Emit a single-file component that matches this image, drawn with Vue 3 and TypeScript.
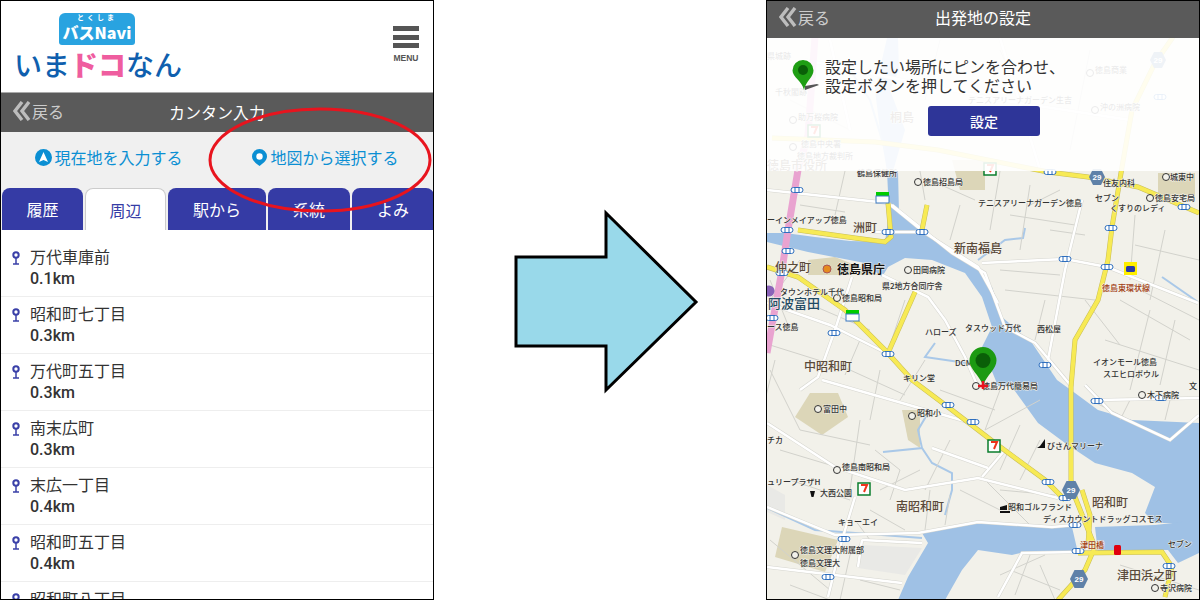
<script setup lang="ts">
interface Stop { name: string; dist: string }
interface Label { x: number; y: number; t: string; k?: string }

const tabs = ['履歴', '周辺', '駅から', '系統', 'よみ']
const stops: Stop[] = [
  { name: '万代車庫前', dist: '0.1km' },
  { name: '昭和町七丁目', dist: '0.3km' },
  { name: '万代町五丁目', dist: '0.3km' },
  { name: '南末広町', dist: '0.3km' },
  { name: '末広一丁目', dist: '0.4km' },
  { name: '昭和町五丁目', dist: '0.4km' },
  { name: '昭和町八丁目', dist: '0.4km' },
]

// everything on the map is in page coordinates (viewBox follows the page)
const water = [
  '767,233 785,233 815,237 850,241 885,242 889,213 887,171 898,171 899,213 925,233 952,253 978,270 992,287 1002,317 1032,343 1057,380 1075,393 1098,410 1132,420 1199,423 1199,523 1155,523 1145,513 1155,487 1132,473 1095,463 1065,443 1038,423 1012,387 998,386 982,347 992,327 982,297 965,273 932,260 905,258 888,267 882,277 865,263 808,252 767,242',
  '922,533 975,522 1072,527 1078,553 1025,552 1012,555 978,550 962,570 945,600 898,600 908,577 928,543',
  '1095,527 1155,525 1199,520 1199,553 1178,563 1168,550 1118,550 1098,553',
  '887,38 898,38 899,70 890,90 905,130 893,171 887,171 880,130 875,90',
]
const beige = [
  '810,393 838,393 848,417 822,435 795,417',
  '902,410 920,410 920,448 908,440',
  '782,527 838,540 825,572 775,557',
  '808,260 835,257 880,275 808,275',
  '952,160 985,160 985,190 960,190',
  '1158,173 1195,173 1195,197 1158,197',
]
const grey = ['767,485 785,495 785,520 767,512', '862,545 922,548 905,575 858,568']
const minor = [
  '845,171 835,215', '920,171 925,200', '1000,171 990,230', '1030,185 1020,250', '1050,230 1085,235',
  '1000,270 1060,275', '1005,290 1095,300', '1135,215 1130,280', '1165,230 1150,300', '1120,300 1190,340',
  '1105,340 1199,370', '1150,310 1130,390', '800,300 870,330', '770,345 850,370', '850,370 905,395',
  '880,370 870,420', '925,360 900,400', '940,390 995,410', '1000,390 985,430', '985,430 1040,400',
  '770,370 800,430', '800,430 870,445', '860,420 850,490', '875,450 900,470', '900,470 890,500',
  '780,450 830,465', '790,480 850,500', '870,510 905,530', '930,490 925,530', '950,495 945,525',
  '985,480 1030,525', '1000,490 1055,495', '1020,425 1000,470', '1040,440 1020,480', '770,540 830,590',
  '1010,570 1060,590', '1030,555 1015,595', '1090,400 1150,430', '1130,400 1120,420', '1170,400 1165,420',
  '1120,565 1199,590', '850,555 840,600', '860,580 900,590', '770,280 790,330', '800,260 770,300',
  '940,40 925,100', '1000,50 1030,120', '1090,50 1070,150', '790,100 850,130', '930,110 1020,130',
  '1030,205 1060,190', '1135,245 1199,260', '1140,290 1199,320', '1175,320 1160,385', '1085,300 1120,345',
  '1045,300 1035,340', '1010,215 1075,225', '930,180 975,200', '960,205 950,240', '800,205 845,212',
  '775,360 765,400', '905,300 890,345', '860,340 845,375', '950,440 925,490', '880,490 920,470',
  '1000,575 1045,555', '1040,565 1055,600', '790,585 830,600', '855,520 870,540', '960,490 1000,510',
]
const whites = [
  '767,190 888,203 925,233 978,267 998,303',
  '892,205 952,253 985,273 1005,327 1035,343 1072,387',
  '982,263 1065,259 1107,267 1198,303',
  '1082,200 1065,270 1048,360',
  '852,277 835,330 818,377 800,390',
  '882,275 928,297 945,320 965,357 978,387',
  '822,380 968,422 990,440',
  '767,423 835,467 905,490 978,478 1058,498',
  '767,507 835,535 918,533 978,522 1052,527 1075,525',
  '855,497 842,540 828,597',
  '932,448 988,468',
  '1005,450 982,477',
  '1098,400 1199,398',
  '1085,385 1112,413 1170,440 1199,415',
  '1078,552 1022,553 998,597',
  '767,567 902,583',
  '862,540 858,567',
  '862,540 922,543',
  '870,232 925,232',
  '767,303 830,325 890,355',
  '805,60 1000,100 1130,120',
  '830,40 850,130',
  '1000,38 1040,170',
]
const streams = [
  '978,260 1005,240 1023,238 1025,228',
  '1162,277 1198,302',
  '935,343 925,357 980,365',
  '928,413 918,430 922,448 883,452',
  '922,448 932,463 952,473 952,490 945,515',
  '767,508 815,530 922,538',
  '850,70 870,100 885,150',
]
const yellows = [
  '1173,37 1155,63 1132,110 1122,167 1112,227 1108,260 1098,300 1075,340 1071,387 1071,480 1075,497 1095,547 1085,570 1058,600',
  '767,267 798,277 845,310 885,350 912,380 948,407 995,443 1045,480 1065,500',
  '915,292 888,353',
  '888,203 891,237 885,242 855,238 798,230',
  '927,205 922,230',
  '772,138 875,142 938,150 1048,172 1088,177 1138,187 1199,213',
  '1078,553 1162,552 1172,567 1165,597',
  '1082,490 1090,515 1088,545',
]
const rail = '815,37 808,135 798,170 788,230 782,270 767,353'
const shields = [
  { x: 1097, y: 177, r: 8 },
  { x: 1071, y: 490, r: 9 },
  { x: 1079, y: 579, r: 9 },
  { x: 1158, y: 60, r: 8 },
]
const bridges = [
  [797, 190], [787, 230], [788, 251], [888, 232], [922, 232], [1065, 259], [1107, 267], [1111, 228], [1184, 207],
  [782, 273], [834, 333], [888, 354], [1045, 365], [772, 318], [948, 405], [973, 422], [1097, 401], [1161, 398],
  [1048, 482], [1065, 498], [1075, 525], [1078, 551], [1169, 566], [844, 539], [828, 577], [1050, 172], [1160, 97],
]
const sevens = [[988, 440], [858, 483], [984, 163], [808, 125]]
const marks = [
  [918, 182], [1150, 198], [1166, 177], [837, 298], [908, 270], [976, 386], [1142, 395], [818, 409], [912, 416],
  [837, 470], [795, 555], [1155, 588], [1090, 73], [1095, 110], [793, 147], [793, 120],
]

const labels: Label[] = [
  { x: 857, y: 176, t: '鶴島保健所' }, { x: 923, y: 185, t: '徳島招島局' }, { x: 1170, y: 180, t: '城東中' },
  { x: 1155, y: 201, t: '徳島安宅局' }, { x: 1103, y: 186, t: '住友内科' }, { x: 1095, y: 201, t: 'セブン' },
  { x: 1110, y: 211, t: 'くすりのレディ' }, { x: 978, y: 206, t: 'テニスアリーナガーデン徳島' },
  { x: 767, y: 223, t: 'ーインメイアップ徳島' }, { x: 780, y: 295, t: 'タウンホテル千代' },
  { x: 842, y: 301, t: '徳島昭和局' }, { x: 913, y: 273, t: '田岡病院' }, { x: 882, y: 289, t: '県2地方合同庁舎' },
  { x: 925, y: 335, t: 'ハローズ' }, { x: 965, y: 331, t: 'タスウッド万代' }, { x: 1037, y: 332, t: '西松屋' },
  { x: 767, y: 330, t: 'ース徳島' }, { x: 955, y: 366, t: 'DCM' }, { x: 903, y: 381, t: 'キリン堂' },
  { x: 982, y: 389, t: '徳島万代簡易局' }, { x: 1093, y: 365, t: 'イオンモール徳島' },
  { x: 1103, y: 377, t: 'スエヒロボウル' }, { x: 1189, y: 389, t: '文' },
  { x: 1147, y: 398, t: '木下病院' }, { x: 823, y: 412, t: '富田中' }, { x: 917, y: 416, t: '昭和小' },
  { x: 1047, y: 449, t: 'びさんマリーナ' }, { x: 767, y: 443, t: 'チカ' }, { x: 842, y: 470, t: '徳島南昭和局' },
  { x: 767, y: 485, t: 'ュリープラザH' }, { x: 820, y: 496, t: '大西公園' }, { x: 1008, y: 510, t: '昭和ゴルフランド' },
  { x: 1043, y: 522, t: 'ディスカウントドラッグコスモス' }, { x: 838, y: 525, t: 'キョーエイ' },
  { x: 1168, y: 547, t: 'セブン' }, { x: 800, y: 553, t: '徳島文理大附属部' }, { x: 800, y: 566, t: '徳島文理大' },
  { x: 1160, y: 591, t: '寺沢病院' },
  { x: 1095, y: 73, t: '徳島商業' }, { x: 1100, y: 110, t: '沖の洲病院' }, { x: 968, y: 103, t: 'テニスアリーナガーデン生吉' },
  { x: 798, y: 120, t: '助万桜病院' }, { x: 801, y: 147, t: '徳島中央署' }, { x: 797, y: 159, t: '徳島地方裁判所' },
  { x: 775, y: 95, t: '千秋閣跡' }, { x: 767, y: 59, t: '県城跡' },
  { x: 1102, y: 291, t: '徳島東環状線', k: 'route' }, { x: 1080, y: 548, t: '津田橋', k: 'route' },
  { x: 853, y: 232, t: '洲町', k: 'area' }, { x: 954, y: 253, t: '新南福島', k: 'area' },
  { x: 804, y: 371, t: '中昭和町', k: 'area' }, { x: 775, y: 272, t: '仲之町', k: 'area' },
  { x: 896, y: 511, t: '南昭和町', k: 'area' }, { x: 1092, y: 507, t: '昭和町', k: 'area' },
  { x: 1117, y: 580, t: '津田浜之町', k: 'area' }, { x: 890, y: 122, t: '桐島', k: 'area' },
  { x: 767, y: 170, t: '徳島市役所', k: 'area' },
  { x: 768, y: 308, t: '阿波富田', k: 'station' }, { x: 837, y: 274, t: '徳島県庁', k: 'office' },
]
</script>

<template>
  <div class="page">
    <section class="phone">
      <header class="site-head">
        <div class="logo">
          <div class="bus">
            <span class="bus-small">とくしま</span>
            <span class="bus-name">バスNavi</span>
          </div>
          <div class="logo-text">いま<b>ドコ</b>なん</div>
        </div>
        <div class="menu">
          <i /><i /><i />
          <span>MENU</span>
        </div>
      </header>

      <div class="bar">
        <span class="back">
          <svg width="18" height="20" viewBox="0 0 18 20" fill="none" stroke="#bdbdbd" stroke-width="3.4">
            <path d="M9 1 2 10l7 9M16 1 9 10l7 9" />
          </svg>
          戻る
        </span>
        <span class="bar-title">カンタン入力</span>
      </div>

      <div class="actions">
        <a>
          <svg width="17" height="17" viewBox="0 0 17 17">
            <circle cx="8.5" cy="8.5" r="8.5" fill="#0b8fd3" />
            <path d="M8.5 3 13 13l-4.5-2L4 13z" fill="#fff" />
          </svg>
          現在地を入力する
        </a>
        <a>
          <svg width="17" height="17" viewBox="0 0 17 17">
            <path d="M8.5 0A7.500 7.500 0 0 1 16 7.500C16 12 11 15 8.500 17 6 15 1 12 1 7.500A7.500 7.500 0 0 1 8.500 0z" fill="#0b8fd3" />
            <circle cx="8.5" cy="7.5" r="3.2" fill="#fff" />
          </svg>
          地図から選択する
        </a>
      </div>

      <nav class="tabs">
        <span v-for="(tab, i) in tabs" :key="tab" class="tab" :class="{ active: i === 1 }">{{ tab }}</span>
      </nav>

      <ul class="stops">
        <li v-for="stop in stops" :key="stop.name">
          <svg class="stop-icon" width="8" height="14" viewBox="0 0 8 14" fill="none" stroke="#3a40a8">
            <circle cx="4" cy="4" r="2.7" stroke-width="2" />
            <path d="M4 7v6M1 13h6" stroke-width="1.5" />
          </svg>
          <div>
            <div class="stop-name">{{ stop.name }}</div>
            <div class="stop-dist">{{ stop.dist }}</div>
          </div>
        </li>
      </ul>

      <svg class="ring" width="226" height="108" viewBox="0 0 226 108" fill="none">
        <ellipse cx="113" cy="54" rx="110" ry="51" stroke="#e8141e" stroke-width="3" />
      </svg>
    </section>

    <div class="between">
      <svg width="332" height="600" viewBox="434 0 332 600">
        <path d="M516 257h90v-44l90 89-90 88v-44h-90z" fill="#99d9ea" stroke="#000" stroke-width="3" />
      </svg>
    </div>

    <section class="phone">
      <div class="bar top">
        <span class="back">
          <svg width="18" height="20" viewBox="0 0 18 20" fill="none" stroke="#bdbdbd" stroke-width="3.4">
            <path d="M9 1 2 10l7 9M16 1 9 10l7 9" />
          </svg>
          戻る
        </span>
        <span class="bar-title">出発地の設定</span>
      </div>

      <div class="map">
        <svg class="map-svg" width="432" height="561" viewBox="767 38 432 561">
          <rect x="767" y="38" width="432" height="561" fill="#f2f1ea" />
          <polygon v-for="p in beige" :key="p" :points="p" fill="#dcd6b8" />
          <polygon v-for="p in grey" :key="p" :points="p" fill="#e9e9e6" />
          <polygon v-for="p in water" :key="p" :points="p" fill="#9fc1e5" />
          <polyline v-for="p in streams" :key="p" :points="p" fill="none" stroke="#a9c8e8" stroke-width="2" />
          <polyline v-for="p in minor" :key="p" :points="p" fill="none" stroke="#d2d2cc" stroke-width="1" />
          <polyline v-for="p in whites" :key="p" :points="p" fill="none" stroke="#d6d6d0" stroke-width="3.5" />
          <polyline v-for="p in whites" :key="'w' + p" :points="p" fill="none" stroke="#fff" stroke-width="2.5" />
          <polyline :points="rail" fill="none" stroke="#e9a3d0" stroke-width="7" />
          <polyline v-for="p in yellows" :key="p" :points="p" fill="none" stroke="#c8bd58" stroke-width="5" />
          <polyline v-for="p in yellows" :key="'y' + p" :points="p" fill="none" stroke="#f7ea55" stroke-width="4" />

          <g v-for="b in bridges" :key="b.join()">
            <rect :x="b[0] - 6" :y="b[1] - 2.5" width="12" height="5" rx="2.5" fill="#fff" stroke="#2f6fbe" />
            <path :d="`M${b[0] - 2} ${b[1] - 2}v4M${b[0] + 2} ${b[1] - 2}v4`" stroke="#2f6fbe" />
          </g>
          <g v-for="s in shields" :key="s.x">
            <polygon
              :points="`${s.x - s.r},${s.y} ${s.x - s.r / 2},${s.y - s.r} ${s.x + s.r / 2},${s.y - s.r} ${s.x + s.r},${s.y} ${s.x + s.r / 2},${s.y + s.r} ${s.x - s.r / 2},${s.y + s.r}`"
              fill="#5f81a8"
            />
            <text class="shield" :x="s.x" :y="s.y + 3">29</text>
          </g>
          <g v-for="s in sevens" :key="s.join()">
            <rect :x="s[0]" :y="s[1]" width="12" height="12" fill="#fff" stroke="#0a7d2c" stroke-width="1.5" />
            <path :d="`M${s[0] + 3} ${s[1] + 2}h6l-3 7`" fill="none" stroke="#f0341c" stroke-width="2" />
          </g>
          <circle v-for="m in marks" :key="m.join()" :cx="m[0]" :cy="m[1]" r="3.5" fill="#f2f1ea" stroke="#333" />

          <g fill="#0c0">
            <rect x="876" y="192" width="13" height="4" />
            <rect x="846" y="310" width="13" height="4" />
          </g>
          <g fill="#fff" stroke="#3a78c0">
            <rect x="876" y="196" width="13" height="7" />
            <rect x="846" y="314" width="13" height="7" />
          </g>
          <rect x="1124" y="262" width="13" height="13" fill="#ffef00" />
          <rect x="1126" y="266" width="9" height="6" rx="1.5" fill="#2a3aa8" />
          <rect x="1114" y="545" width="7" height="10" rx="1.5" fill="#e0000f" />
          <path d="M810 491h5l-1.5 6h-2zM1000 510h7v-5l-7 2zM1000 511h10v2h-10zM1040 446l5-7v9h-8z" fill="#111" />

          <text
            v-for="l in labels"
            :key="l.t + l.x"
            :x="l.x"
            :y="l.y"
            class="map-label"
            :class="l.k"
          >{{ l.t }}</text>

          <circle cx="769" cy="291" r="5.5" fill="#8a63b8" />
          <circle cx="827" cy="269" r="4" fill="#e58b1f" stroke="#a55" />
        </svg>

        <div class="target">
          <svg width="30" height="42" viewBox="0 0 30 42">
            <path d="M15 0A13.500 13.500 0 0 1 28.500 13.500C28.500 22 19 28 15 38 11 28 1.500 22 1.500 13.500A13.500 13.500 0 0 1 15 0z" fill="#1c9a12" />
            <circle cx="15" cy="13.5" r="7.5" fill="#0a5f08" />
            <path d="M10 39h10M15 34v8" stroke="#e8141e" stroke-width="2.5" />
          </svg>
        </div>

        <div class="panel">
          <div class="message">
            <svg width="30" height="32" viewBox="0 0 30 32">
              <path d="M14 30 28 25l-2-1-12 2z" fill="#555" />
              <path d="M12 0A10.500 10.500 0 0 1 22.500 10.500C22.500 17 15 21 13 30 11 21 1.500 17 1.500 10.500A10.500 10.500 0 0 1 12 0z" fill="#1f9e14" />
              <circle cx="12" cy="10" r="5" fill="#0a5f08" />
            </svg>
            <p>設定したい場所にピンを合わせ、<br>設定ボタンを押してください</p>
          </div>
          <button class="set" type="button">設定</button>
        </div>
      </div>
    </section>
  </div>
</template>

<style scoped>
.page {
  display: flex;
  width: 1200px;
  height: 600px;
  overflow: hidden;
  background: #fff;
  font-family: "Noto Sans CJK JP", sans-serif;
  color: #333;
}

.phone {
  position: relative;
  display: flex;
  flex-direction: column;
  flex: none;
  box-sizing: border-box;
  width: 434px;
  height: 600px;
  border: 1px solid #000;
  overflow: hidden;
}

.between {
  flex: 1;
  line-height: 0;
}

.site-head {
  display: flex;
  flex: none;
  justify-content: space-between;
  box-sizing: border-box;
  height: 92px;
  padding: 12px 14px 0 13px;
  border-bottom: 1px solid #aaa;
}

.logo {
  display: flex;
  flex-direction: column;
  align-items: center;
  width: 168px;
}

.bus {
  display: flex;
  flex-direction: column;
  align-items: center;
  width: 76px;
  height: 32px;
  margin-left: -2px;
  border-radius: 6px 6px 3px 3px;
  background: #29a3e0;
  color: #fff;
}

.bus-small {
  font-size: 7px;
  font-weight: 700;
  line-height: 9px;
  letter-spacing: 3px;
}

.bus-name {
  margin-top: 1px;
  font-size: 16px;
  font-weight: 900;
  line-height: 18px;
  white-space: nowrap;
}

.logo-text {
  margin-top: 1px;
  color: #0f5fae;
  font-size: 28px;
  font-weight: 500;
  line-height: 36px;
  white-space: nowrap;
}

.logo-text b {
  color: #ef5d9f;
  font-weight: 900;
}

.menu {
  display: flex;
  flex-direction: column;
  align-items: center;
  width: 26px;
  padding-top: 13px;
}

.menu i {
  display: block;
  width: 26px;
  height: 5px;
  margin-bottom: 3.5px;
  background: #555;
}

.menu span {
  margin-top: 1px;
  font-family: "Liberation Sans", sans-serif;
  font-size: 8.5px;
  font-weight: 700;
  line-height: 10px;
  color: #555;
}

.bar {
  position: relative;
  display: flex;
  flex: none;
  align-items: center;
  justify-content: center;
  box-sizing: border-box;
  height: 39px;
  padding-bottom: 2px;
  background: #5a5a5a;
}

.bar.top {
  height: 37px;
  padding-bottom: 5px;
}

.back {
  position: absolute;
  left: 12px;
  top: 0;
  bottom: 3px;
  display: flex;
  align-items: center;
  gap: 1px;
  color: #ccc;
  font-size: 16px;
}

.top .back {
  bottom: 5px;
}

.bar-title {
  color: #fff;
  font-size: 16px;
}

.actions {
  display: grid;
  flex: none;
  grid-template-columns: 1fr 1fr;
  box-sizing: border-box;
  height: 56px;
  padding-bottom: 6px;
  background: #f0f0f0;
}

.actions a {
  display: flex;
  align-items: center;
  justify-content: center;
  gap: 2px;
  color: #0b8fd3;
  font-size: 16px;
}

.tabs {
  display: grid;
  flex: none;
  grid-template-columns: 81px 81px 98px 82px 82px;
  gap: 2px;
  height: 42px;
  padding-left: 1px;
  background: #f0f0f0;
}

.tab {
  display: flex;
  align-items: center;
  justify-content: center;
  border-radius: 8px 8px 0 0;
  background: #353ba5;
  color: #fff;
  font-size: 16px;
}

.tab.active {
  box-sizing: border-box;
  border: 1px solid #ccc;
  border-bottom: 0;
  background: #fff;
  color: #353ba5;
}

.stops {
  flex: none;
  margin: 0;
  padding: 10px 0 0;
  list-style: none;
}

.stops li {
  display: flex;
  box-sizing: border-box;
  height: 57px;
  padding: 6px 0 0 11px;
  border-bottom: 1px solid #eee;
}

.stop-icon {
  margin: 5px 10px 0 0;
}

.stop-name {
  font-size: 16px;
  line-height: 20px;
}

.stop-dist {
  margin-top: 3px;
  font-family: Roboto, sans-serif;
  font-size: 16px;
  font-weight: 500;
  line-height: 20px;
}

.ring {
  position: absolute;
  left: 206px;
  top: 105px;
}

.map {
  position: relative;
  flex: 1;
  overflow: hidden;
}

.map-svg {
  display: block;
}

.map-label {
  fill: #333;
  font-size: 8px;
  font-weight: 500;
  paint-order: stroke;
  stroke: #f2f1ea;
  stroke-width: 1px;
}

.map-label.area {
  fill: #5a4a3a;
  font-size: 12px;
}

.map-label.route {
  fill: #a03a10;
  font-size: 8px;
}

.map-label.station {
  fill: #1f4a63;
  font-size: 13px;
}

.map-label.office {
  fill: #111;
  font-size: 12px;
  font-weight: 700;
}

.shield {
  fill: #fff;
  font-family: "Liberation Sans", sans-serif;
  font-size: 8px;
  font-weight: 700;
  text-anchor: middle;
}

.target {
  position: absolute;
  left: 201px;
  top: 309px;
  line-height: 0;
}

.panel {
  position: absolute;
  left: 0;
  right: 0;
  top: 0;
  display: flex;
  flex-direction: column;
  align-items: center;
  box-sizing: border-box;
  height: 133px;
  padding-top: 19px;
  background: rgba(255, 255, 255, 0.9);
}

.message {
  display: flex;
  align-self: flex-start;
  align-items: center;
  gap: 28px;
  padding-left: 24px;
}

.message svg {
  flex: none;
  width: 30px;
  margin-right: -24px;
}

.message p {
  margin: 0;
  color: #333;
  font-size: 16px;
  line-height: 19px;
}

.set {
  width: 112px;
  height: 30px;
  margin: 11px 0 0 2px;
  padding: 0;
  border: 0;
  border-radius: 3px;
  background: #2e3598;
  color: #fff;
  font-family: inherit;
  font-size: 14px;
  font-weight: 500;
}
</style>
